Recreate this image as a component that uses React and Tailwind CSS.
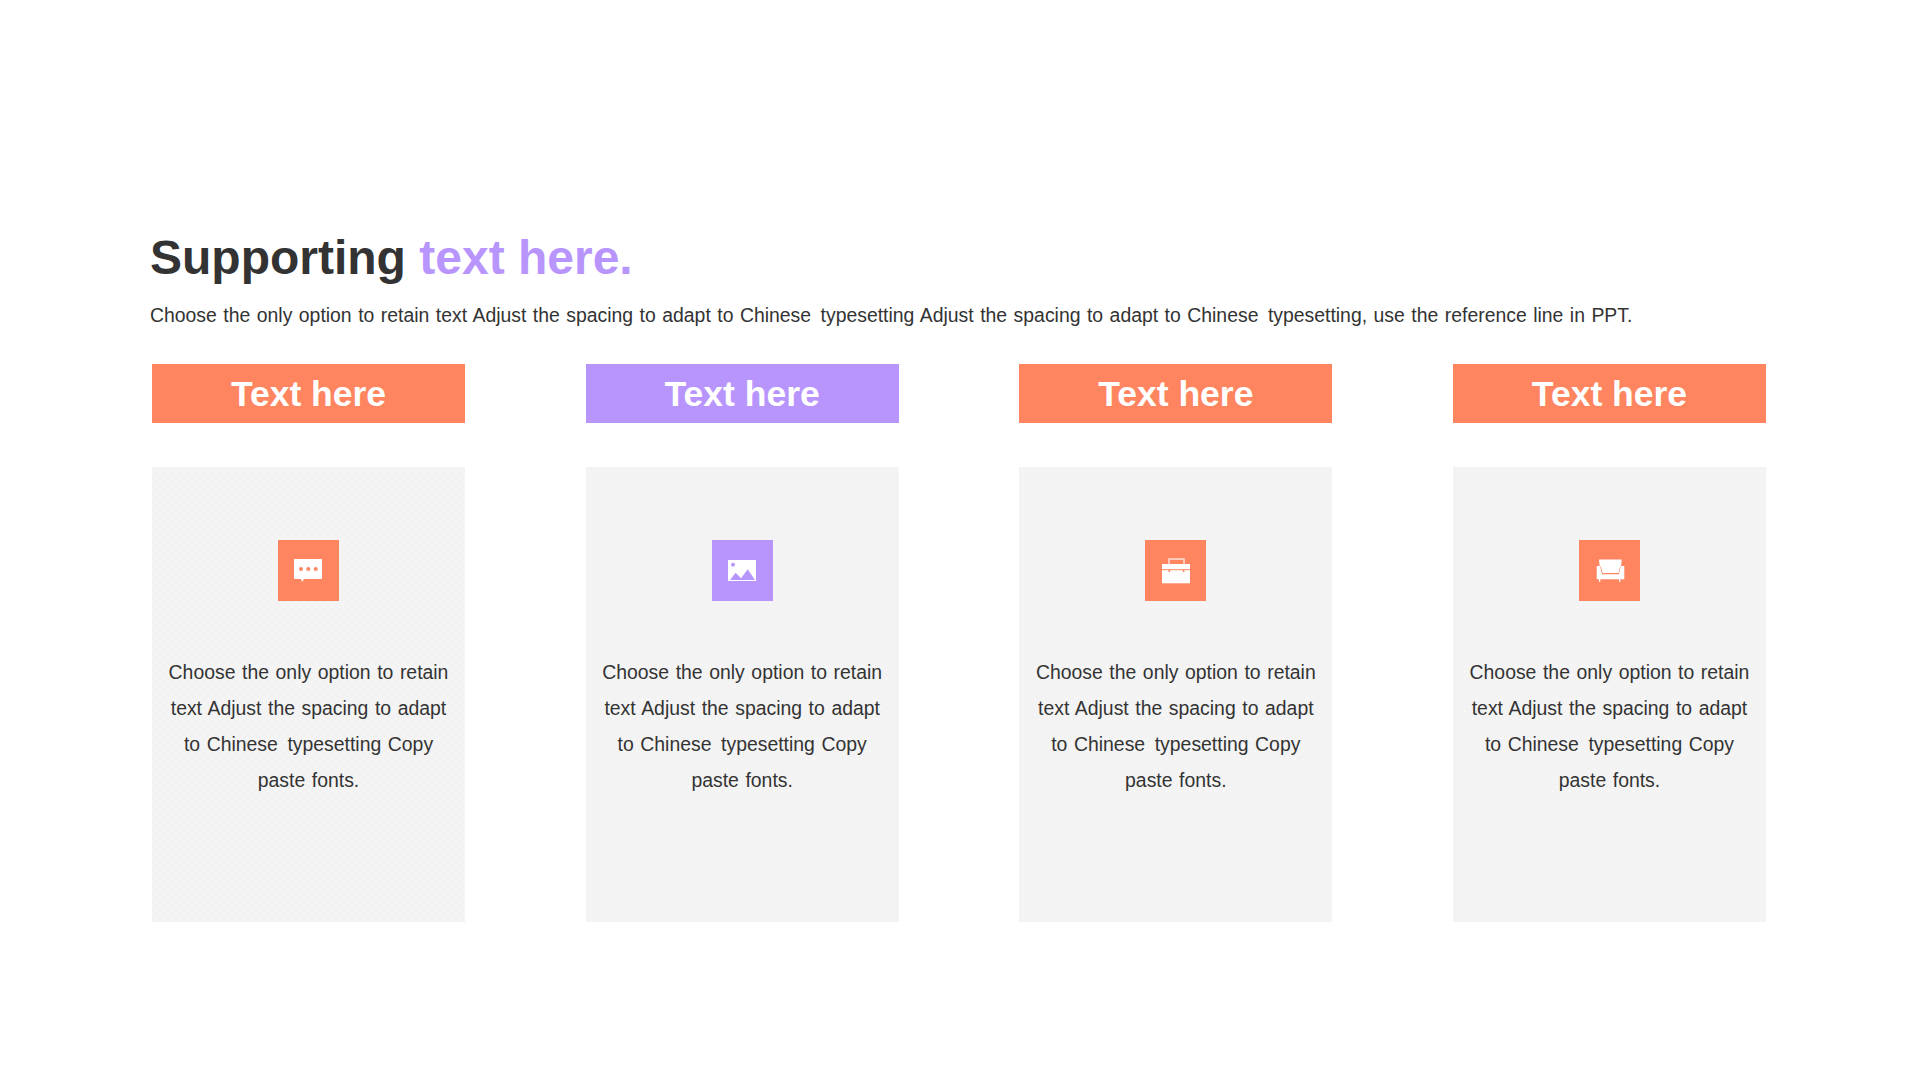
const font = { fontFamily: '"Liberation Sans", Arial, sans-serif' };

function ChatIcon() {
  return (
    <svg viewBox="0 0 61 61" className="w-full h-full">
      <path d="M16 19h28v20H26l-2 3-1-3h-7z" fill="#fff" />
      <circle cx="23" cy="29" r="2" fill="#ff8560" />
      <circle cx="30.3" cy="29" r="2" fill="#ff8560" />
      <circle cx="37.7" cy="29" r="2" fill="#ff8560" />
    </svg>
  );
}

function ImageIcon() {
  return (
    <svg viewBox="0 0 61 61" className="w-full h-full">
      <rect x="16" y="20" width="28" height="21" fill="#fff" />
      <circle cx="21" cy="24.7" r="2" fill="#b795fd" />
      <path d="M18 40l5.7-7.3 5.3 5.6 6.7-9L43 40z" fill="#b795fd" />
    </svg>
  );
}

function CaseIcon() {
  return (
    <svg viewBox="0 0 61 61" className="w-full h-full">
      <path d="M24 24v-5h15v5" fill="none" stroke="#ffe0d6" strokeWidth="1.5" />
      <rect x="17" y="24" width="28" height="19.3" fill="#fff" />
      <rect x="17" y="29.2" width="28" height="1" fill="#ff8560" />
      <rect x="23.5" y="30" width="1.6" height="2" fill="#ff8560" />
      <rect x="37.8" y="30" width="1.6" height="2" fill="#ff8560" />
    </svg>
  );
}

function SofaIcon() {
  return (
    <svg viewBox="0 0 61 61" className="w-full h-full">
      <path d="M20 19.5h22.7L42 26.5H20.7z" fill="#fff" />
      <path d="M21.7 26h19.5l-1.5 7H23.5z" fill="#fff" />
      <path d="M17.7 26h3.3l2 8.2h17l1.8-8.2h3.5v13.3H17.7z" fill="#fff" />
      <rect x="20" y="39" width="1.3" height="2.8" fill="#fff" />
      <rect x="40" y="39" width="1.3" height="2.8" fill="#fff" />
    </svg>
  );
}

const columns = [
  { color: "bg-[#ff8560]", icon: <ChatIcon /> },
  { color: "bg-[#b795fd]", icon: <ImageIcon /> },
  { color: "bg-[#ff8560]", icon: <CaseIcon /> },
  { color: "bg-[#ff8560]", icon: <SofaIcon /> },
];

function Column({ color, icon }) {
  return (
    <div className="w-[313px]">
      <div className={`${color} h-[59px] pt-[3px] flex items-center justify-center text-white text-[35.5px] font-bold leading-none`}>
        Text here
      </div>
      <div className="mt-[44px] h-[455px] bg-[#f3f3f3] bg-[radial-gradient(#f8f8f8_0.6px,transparent_1px),radial-gradient(#f8f8f8_0.6px,transparent_1px)] bg-[size:8px_8px] bg-[position:0_0,4px_4px] pt-[73px] flex flex-col items-center">
        <div className={`${color} w-[61px] h-[61px]`}>{icon}</div>
        <p className="mt-[53px] w-full px-[10px] text-center text-[19.4px] leading-[36px] text-[#333] [word-spacing:1.2px]">
          Choose the only option to retain
          <br />
          text Adjust the spacing to adapt
          <br />
          to Chinese <span className="ml-[3px]">typesetting</span> Copy
          <br />
          paste fonts.
        </p>
      </div>
    </div>
  );
}

export default function App() {
  return (
    <div className="w-[1920px] h-[1080px] bg-white overflow-hidden pt-[229px]" style={font}>
      <div className="pl-[150px]">
        <h1 className="text-[48px] leading-[58px] font-bold text-[#333]">
          Supporting <span className="text-[#b795fd]">text here.</span>
        </h1>
        <p className="mt-[16px] text-[19.4px] leading-[24px] text-[#333] [word-spacing:1.1px]">
          Choose the only option to retain text Adjust the spacing to adapt to Chinese <span className="ml-[3px]">typesetting</span> Adjust the spacing to adapt to Chinese <span className="ml-[3px]">typesetting,</span> use the reference line in PPT.
        </p>
      </div>
      <div className="mt-[37px] ml-[152px] w-[1614px] flex justify-between">
        {columns.map((c, i) => (
          <Column key={i} color={c.color} icon={c.icon} />
        ))}
      </div>
    </div>
  );
}
